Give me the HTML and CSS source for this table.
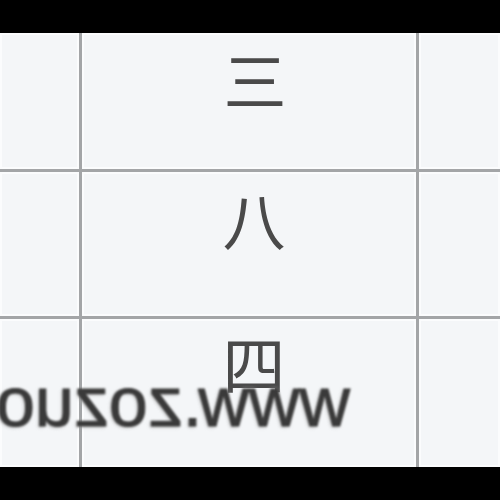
FILE: index.html
```html
<!DOCTYPE html>
<html>
<head>
<meta charset="utf-8">
<link rel="stylesheet" href="styles.css">
</head>
<body>
<div class="bar"></div>
<div class="table">
  <div class="cell"></div>
  <div class="cell char"><span class="c1">三</span></div>
  <div class="cell"></div>
  <div class="cell"></div>
  <div class="cell char"><span class="c2">八</span></div>
  <div class="cell"></div>
  <div class="cell"></div>
  <div class="cell char"><span class="c3">四</span></div>
  <div class="cell"></div>
</div>
<div class="bar"></div>
<div class="mark">www.zozuo.com</div>
</body>
</html>
```
FILE: styles.css
```css
html, body {
  margin: 0;
  padding: 0;
  width: 500px;
  height: 500px;
  overflow: hidden;
  background: #000;
  position: relative;
}
.bar {
  height: 33px;
  background: #000;
}
.table {
  display: grid;
  grid-template-columns: 79px 334px 81px;
  grid-template-rows: 136px 144px 148px;
  column-gap: 3px;
  row-gap: 3px;
  background: #a3a5a7;
  height: 434px;
}
.cell {
  background: #f4f6f8;
  box-shadow: inset 0 0 0 2px #fbfcfd;
  display: flex;
  align-items: center;
  justify-content: center;
  font-family: "Noto Sans CJK SC", sans-serif;
  color: #4a4a4a;
  font-size: 63px;
  line-height: 1;
  filter: blur(0.6px);
}
.c1 { transform: translate(6px, -24px); }
.c2 { transform: translate(5px, -27px); }
.c3 { transform: translate(5px, -32px); }
.mark {
  position: absolute;
  left: 0;
  width: 350px;
  top: 362px;
  font-family: "Liberation Sans", sans-serif;
  font-size: 70px;
  line-height: normal;
  color: #3a3a3a;
  -webkit-text-stroke: 1px #3a3a3a;
  transform: scaleX(-1);
  transform-origin: center center;
  white-space: nowrap;
  text-shadow: 0 0 3px rgba(255,255,255,0.9), 1px 1px 3px #999;
  filter: blur(0.8px);
}
```
